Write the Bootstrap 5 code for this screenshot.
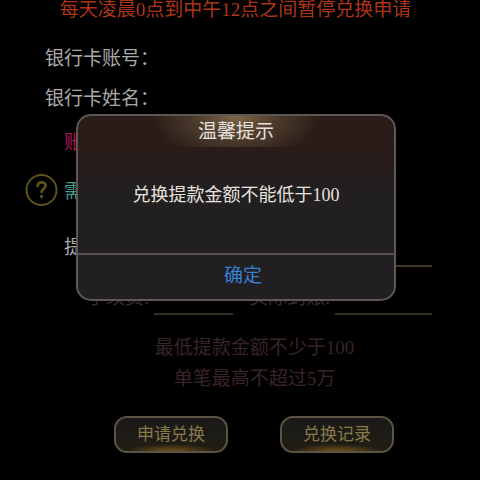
<!DOCTYPE html>
<html lang="zh-CN">
<head>
<meta charset="utf-8">
<meta name="viewport" content="width=device-width, initial-scale=1">
<title>兑换</title>
<link rel="stylesheet" href="https://cdn.jsdelivr.net/npm/bootstrap@5.3.0/dist/css/bootstrap.min.css">
<style>
body { background: #000; color: #a9a9a9; font-family: "Liberation Serif", "Noto Sans CJK SC", serif; font-size: 19px; line-height: 20px; }
.page { min-height: 100vh; padding-bottom: 24px; }
.notice { color: #ad3517; padding-right: 9px; line-height: 20px; margin-bottom: 29px; }
.form-area { padding: 0 48px 0 64px; }
.bank-row { margin: 0 0 20px -19px; }
.account-row { color: #a51752; margin-top: 24px; }
.need-row { color: #4d9a8d; margin: 21px 0 21px -39px; gap: 6px; }
.need-row span { line-height: 24px; padding-top: 4px; }
.help-btn { width: 33px; height: 32px; }
.help-btn svg { display: block; }
.line-input { background: transparent; border-bottom: 2px solid #3f391f; color: #a9a9a9; height: 40px; min-width: 0; }
.amount-label { padding-top: 2px; }
.fee-row { color: #342f2a; margin: 14px 0 17px 23px; }
.fee-row .line-input { height: 34px; border-color: #352e24; }
.fee-input { flex: 78 1 0; margin: 0 16px 0 5px; }
.real-input { flex: 97 1 0; margin-left: 5px; }
.tips { color: #382426; line-height: 31px; padding-left: 29px; margin-bottom: 22px; }
.actions { gap: 52px; padding-left: 28px; }
.gold-btn { width: 114px; height: 37px; border: 2px solid #5b5344; border-radius: 13px; color: #887948; font-size: 17px; line-height: 20px; background: radial-gradient(ellipse 46px 7px at 50% 100%, #725219, transparent), linear-gradient(#1a1a18, #201d15); }
.gold-btn:hover { color: #887948; border-color: #5b5344; }
.overlay { padding: 114px 8px 0 0; }
.dialog { width: 68%; border: 2px solid #5f5852; border-radius: 15px; background: linear-gradient(#2a1c18, #281c19 22%, #221f20 40%, #221f23); color: #e6e2df; }
.dialog-head { line-height: 30px; border-radius: 13px 13px 0 0; padding-top: 1px; background: radial-gradient(ellipse 84px 48px at 50% 0, #7d6747, #4f3d2d 45%, transparent); }
.dialog-text { font-size: 18px; line-height: 24px; padding: 36px 8px 46px; }
.ok-btn { border-top: 2px solid #57534f; color: #3580d6; line-height: 22px; padding: 10px 0 12px 14px; }
</style>
<script src="https://cdn.jsdelivr.net/npm/bootstrap@5.3.0/dist/js/bootstrap.bundle.min.js"></script>
</head>
<body>
<main class="page position-relative">
  <div class="notice text-center">每天凌晨0点到中午12点之间暂停兑换申请</div>
  <form class="form-area">
    <div class="bank-row">银行卡账号：</div>
    <div class="bank-row">银行卡姓名：</div>
    <div class="account-row">账</div>
    <div class="need-row d-flex align-items-center">
      <button type="button" class="help-btn btn p-0 border-0" aria-label="?">
        <svg width="33" height="32" viewBox="0 0 33 32" fill="none" stroke="#5c521b" stroke-linecap="round">
          <circle cx="16.5" cy="16" r="15" stroke-width="2"/>
          <path d="M12.6 12C12.8 7.2 20.6 7.2 20.6 11.8C20.6 14.8 16.6 15 16.6 18" stroke-width="2.7"/>
          <circle cx="16.6" cy="22.4" r="1.6" fill="#5c521b" stroke="none"/>
        </svg>
      </button>
      <span>需</span>
    </div>
    <div class="d-flex align-items-center">
      <label for="amount" class="amount-label">提</label>
      <input id="amount" type="text" class="line-input flex-grow-1 border-top-0 border-start-0 border-end-0 ms-5">
    </div>
    <div class="fee-row d-flex align-items-center">
      <label for="fee" class="text-nowrap">手续费:</label>
      <input id="fee" type="text" class="line-input fee-input border-top-0 border-start-0 border-end-0">
      <label for="real" class="text-nowrap">实际到账:</label>
      <input id="real" type="text" class="line-input real-input border-top-0 border-start-0 border-end-0">
    </div>
  </form>
  <div class="tips text-center">最低提款金额不少于100<br>单笔最高不超过5万</div>
  <div class="actions d-flex justify-content-center">
    <button type="button" class="gold-btn btn p-0">申请兑换</button>
    <button type="button" class="gold-btn btn p-0">兑换记录</button>
  </div>
  <div class="overlay position-absolute top-0 start-0 w-100 d-flex justify-content-center">
    <section class="dialog text-center" role="dialog" aria-labelledby="dialogTitle">
      <div id="dialogTitle" class="dialog-head">温馨提示</div>
      <div class="dialog-text">兑换提款金额不能低于100</div>
      <button type="button" class="ok-btn w-100 bg-transparent border-start-0 border-end-0 border-bottom-0">确定</button>
    </section>
  </div>
</main>
</body>
</html>
